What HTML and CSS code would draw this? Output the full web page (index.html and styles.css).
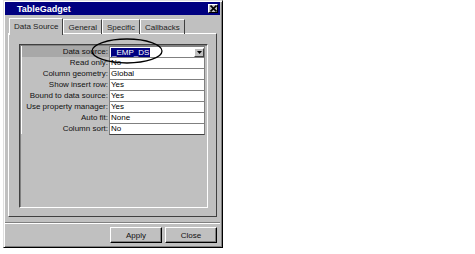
FILE: index.html
```html
<!DOCTYPE html>
<html lang="en">
<head>
    <meta charset="UTF-8">
    <link rel="stylesheet" href="styles.css">
</head>
<body>
    <div class="dialog">
        <div class="title-bar">
            <span class="title">TableGadget</span>
            <span class="close-box">
                <svg width="7" height="7" viewBox="0 0 7 7"><path d="M0.5 0.5L6.5 6.5M6.5 0.5L0.5 6.5" stroke="#000" stroke-width="1.6"/></svg>
            </span>
        </div>
        <div class="tabs">
            <div class="tab active">Data Source</div>
            <div class="tab">General</div>
            <div class="tab">Specific</div>
            <div class="tab">Callbacks</div>
        </div>
        <div class="tab-panel">
            <div class="prop-grid">
                <div class="prop-row current">
                    <div class="prop-label">Data source:</div>
                    <div class="prop-value combo">
                        <span class="selected">_EMP_DS</span>
                        <span class="drop-btn">
                            <svg width="5" height="3" viewBox="0 0 5 3"><path d="M0 0H5L2.5 3Z" fill="#000"/></svg>
                        </span>
                    </div>
                </div>
                <div class="prop-row">
                    <div class="prop-label">Read only:</div>
                    <div class="prop-value">No</div>
                </div>
                <div class="prop-row">
                    <div class="prop-label">Column geometry:</div>
                    <div class="prop-value">Global</div>
                </div>
                <div class="prop-row">
                    <div class="prop-label">Show insert row:</div>
                    <div class="prop-value">Yes</div>
                </div>
                <div class="prop-row">
                    <div class="prop-label">Bound to data source:</div>
                    <div class="prop-value">Yes</div>
                </div>
                <div class="prop-row">
                    <div class="prop-label">Use property manager:</div>
                    <div class="prop-value">Yes</div>
                </div>
                <div class="prop-row">
                    <div class="prop-label">Auto fit:</div>
                    <div class="prop-value">None</div>
                </div>
                <div class="prop-row">
                    <div class="prop-label">Column sort:</div>
                    <div class="prop-value">No</div>
                </div>
            </div>
        </div>
        <div class="button-bar">
            <button class="btn">Apply</button>
            <button class="btn">Close</button>
        </div>
        <!-- hand drawn marker around the data source value -->
        <svg class="callout" width="74" height="28" viewBox="0 0 74 28">
            <ellipse cx="37" cy="14" rx="35" ry="12" fill="none" stroke="#000" stroke-width="1.3"/>
        </svg>
    </div>
</body>
</html>
```

FILE: styles.css
```css
html, body {
    margin: 0;
    padding: 0;
    background: #fff;
    font-family: 'Liberation Sans', Arial, sans-serif;
    font-size: 8px;
    color: #000;
}

body {
    padding: 0 0 0 3px;
}

.dialog {
    position: relative;
    box-sizing: border-box;
    width: 220px;
    height: 248px;
    background: #c0c0c0;
    border: 1px solid;
    border-color: #dfdfdf #000 #000 #dfdfdf;
    box-shadow: inset 1px 1px 0 #fff, inset -1px -1px 0 #808080;
    padding: 1px 2px 2px 1px;
    display: flex;
    flex-direction: column;
}

.title-bar {
    height: 13px;
    background: #000080;
    display: flex;
    align-items: center;
    justify-content: space-between;
    padding: 0 2px 0 12px;
}

.title {
    color: #fff;
    font-weight: bold;
    font-size: 9px;
}

.close-box {
    box-sizing: border-box;
    width: 10px;
    height: 9px;
    background: #c0c0c0;
    border: 1px solid;
    border-color: #fff #000 #000 #fff;
    display: flex;
    align-items: center;
    justify-content: center;
}

.tabs {
    display: flex;
    margin: 3px 0 0 4px;
    height: 16px;
    position: relative;
    z-index: 1;
}

.tab {
    box-sizing: border-box;
    padding: 3px 4px 0 4px;
    border: 1px solid;
    border-color: #fff #404040 transparent #fff;
    border-bottom: none;
    height: 15px;
    margin-top: 1px;
    color: #222;
    white-space: nowrap;
}

.tab.active {
    height: 17px;
    margin-top: 0;
    padding-top: 3px;
    background: #c0c0c0;
}

.tab-panel {
    box-sizing: border-box;
    height: 184px;
    margin: -1px 3px 0 3px;
    border: 1px solid;
    border-color: #fff #404040 #404040 #fff;
    padding: 10px 8px 8px 10px;
}

.prop-grid {
    box-sizing: border-box;
    height: 164px;
    border: 1px solid;
    border-color: #404040 #fff #fff #404040;
    box-shadow: inset 1px 1px 0 #808080;
    padding: 1px 1px 0 1px;
}

.prop-row {
    display: flex;
    height: 11px;
}

.prop-label {
    box-sizing: border-box;
    width: 88px;
    text-align: right;
    padding-right: 1px;
    line-height: 11px;
    border-left: 1px solid #fff;
    color: #111;
    white-space: nowrap;
}

.prop-row.current .prop-label {
    background: #a8a8a8;
}

.prop-value {
    box-sizing: border-box;
    flex: 1;
    margin-right: 1px;
    background: #fff;
    border: 1px solid #808080;
    border-bottom: none;
    line-height: 10px;
    padding-left: 1px;
    white-space: nowrap;
}

.prop-row:last-child .prop-value {
    border-bottom: 1px solid #404040;
    height: 12px;
}

.combo {
    display: flex;
    align-items: center;
    justify-content: space-between;
}

.selected {
    background: #000080;
    color: #fff;
    padding: 0 1px;
    line-height: 9px;
}

.drop-btn {
    box-sizing: border-box;
    width: 10px;
    height: 9px;
    background: #c0c0c0;
    border: 1px solid;
    border-color: #fff #404040 #404040 #fff;
    display: flex;
    align-items: center;
    justify-content: center;
}

.button-bar {
    flex: 1;
    display: flex;
    justify-content: flex-end;
    align-items: flex-start;
    gap: 3px;
    border-top: 1px solid #808080;
    box-shadow: inset 0 1px 0 #fff;
    margin-top: 5px;
    padding: 4px 3px 0 0;
}

.btn {
    box-sizing: border-box;
    width: 52px;
    height: 16px;
    padding: 0;
    font-family: 'Liberation Sans', Arial, sans-serif;
    font-size: 8px;
    color: #111;
    background: #c0c0c0;
    border: 1px solid;
    border-color: #fff #000 #000 #fff;
    box-shadow: inset -1px -1px 0 #808080;
}

.callout {
    position: absolute;
    left: 86px;
    top: 36px;
}
```
